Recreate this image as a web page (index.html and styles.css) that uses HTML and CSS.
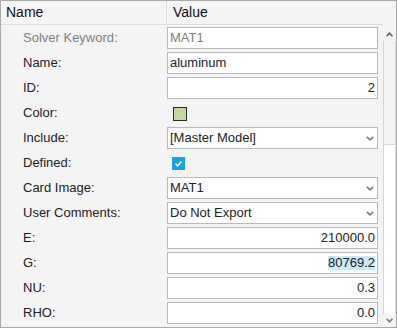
FILE: index.html
```html
<!DOCTYPE html>
<html lang="en">
<head>
  <meta charset="UTF-8">
  <title>Material Properties</title>
  <link rel="stylesheet" href="styles.css">
</head>
<body>
  <div class="grid">
    <div class="main">
      <div class="head">
        <div class="head-name">Name</div>
        <div class="head-value">Value</div>
      </div>
      <div class="rows">
        <div class="row">
          <span class="label muted">Solver Keyword:</span>
          <div class="box muted">MAT1</div>
        </div>
        <div class="row">
          <span class="label">Name:</span>
          <div class="box">aluminum</div>
        </div>
        <div class="row">
          <span class="label">ID:</span>
          <div class="box num">2</div>
        </div>
        <div class="row">
          <span class="label">Color:</span>
          <div class="plain"><span class="swatch"></span></div>
        </div>
        <div class="row">
          <span class="label">Include:</span>
          <div class="box select">
            <span>[Master Model]</span>
            <svg class="chev" width="8" height="5" viewBox="0 0 8 5"><polyline points="0.8,0.8 4,3.8 7.2,0.8" fill="none" stroke="#7a7a7a" stroke-width="1.6"/></svg>
          </div>
        </div>
        <div class="row">
          <span class="label">Defined:</span>
          <div class="plain">
            <span class="check">
              <svg width="13" height="13" viewBox="0 0 13 13"><polyline points="3.5,6.8 5.5,8.8 9.5,4.5" fill="none" stroke="#fff" stroke-width="1.5"/></svg>
            </span>
          </div>
        </div>
        <div class="row">
          <span class="label">Card Image:</span>
          <div class="box select">
            <span>MAT1</span>
            <svg class="chev" width="8" height="5" viewBox="0 0 8 5"><polyline points="0.8,0.8 4,3.8 7.2,0.8" fill="none" stroke="#7a7a7a" stroke-width="1.6"/></svg>
          </div>
        </div>
        <div class="row">
          <span class="label">User Comments:</span>
          <div class="box select">
            <span>Do Not Export</span>
            <svg class="chev" width="8" height="5" viewBox="0 0 8 5"><polyline points="0.8,0.8 4,3.8 7.2,0.8" fill="none" stroke="#7a7a7a" stroke-width="1.6"/></svg>
          </div>
        </div>
        <div class="row">
          <span class="label">E:</span>
          <div class="box num">210000.0</div>
        </div>
        <div class="row">
          <span class="label">G:</span>
          <div class="box num"><span class="selected">80769.2</span></div>
        </div>
        <div class="row">
          <span class="label">NU:</span>
          <div class="box num">0.3</div>
        </div>
        <div class="row">
          <span class="label">RHO:</span>
          <div class="box num">0.0</div>
        </div>
      </div>
    </div>
    <div class="scroll">
      <div class="scroll-btn">
        <svg width="7" height="5" viewBox="0 0 7 5"><polyline points="0.6,4.2 3.5,1.2 6.4,4.2" fill="none" stroke="#606060" stroke-width="1.6"/></svg>
      </div>
      <div class="thumb"></div>
      <div class="track"></div>
      <div class="scroll-btn">
        <svg width="7" height="5" viewBox="0 0 7 5"><polyline points="0.6,0.8 3.5,3.8 6.4,0.8" fill="none" stroke="#7a7a7a" stroke-width="1.6"/></svg>
      </div>
    </div>
  </div>
</body>
</html>
```
FILE: styles.css
```css
body {
  margin: 0;
  font-family: "Liberation Sans", Arial, sans-serif;
  font-size: 13px;
  color: #222;
}
.grid {
  box-sizing: border-box;
  width: 397px;
  height: 328px;
  border: 1px solid #a9a9a9;
  background: #f4f4f4;
  display: flex;
  overflow: hidden;
}
.main {
  width: 382px;
  flex: none;
}
.head {
  display: flex;
  height: 23px;
  border-bottom: 1px solid #dcdcdc;
  font-size: 14px;
  line-height: 23px;
  color: #111;
}
.head-name {
  box-sizing: border-box;
  width: 166px;
  padding-left: 5px;
  border-right: 1px solid #dcdcdc;
}
.head-value {
  padding-left: 6px;
}
.row {
  display: flex;
  align-items: center;
  height: 25px;
}
.label {
  box-sizing: border-box;
  width: 166px;
  padding-left: 22px;
}
.muted {
  color: #808080;
}
.box {
  box-sizing: border-box;
  width: 211px;
  height: 22px;
  margin-top: 1px;
  padding: 0 2px;
  border: 1px solid #b9b9b9;
  background: #fff;
  line-height: 20px;
  white-space: nowrap;
}
.num {
  text-align: right;
}
.select {
  display: flex;
  align-items: center;
  justify-content: space-between;
  padding-right: 3px;
}
.chev {
  display: block;
}
.plain {
  display: flex;
  align-items: center;
  height: 22px;
  padding-left: 6px;
  margin-top: 2px;
}
.swatch {
  box-sizing: border-box;
  width: 14px;
  height: 14px;
  border: 1px solid #2a2a2a;
  background: #c5d7a0;
}
.check {
  display: block;
  width: 13px;
  height: 13px;
  margin-left: -1px;
  background: #17a2e4;
}
.check svg {
  display: block;
}
.selected {
  background: #cce8f7;
  line-height: 14px;
  display: inline-block;
}
.scroll {
  width: 13px;
  flex: none;
  display: flex;
  flex-direction: column;
  padding-top: 27px;
}
.scroll-btn {
  height: 13px;
  display: flex;
  align-items: center;
  justify-content: center;
  flex: none;
}
.thumb {
  height: 104px;
  flex: none;
  box-sizing: border-box;
  border: 1px solid #d6d6d6;
  border-top: none;
  background: #f4f4f4;
}
.track {
  flex: 1;
  box-sizing: border-box;
  border-left: 1px solid #d6d6d6;
  border-right: 1px solid #d6d6d6;
  background: #fff;
}
```
